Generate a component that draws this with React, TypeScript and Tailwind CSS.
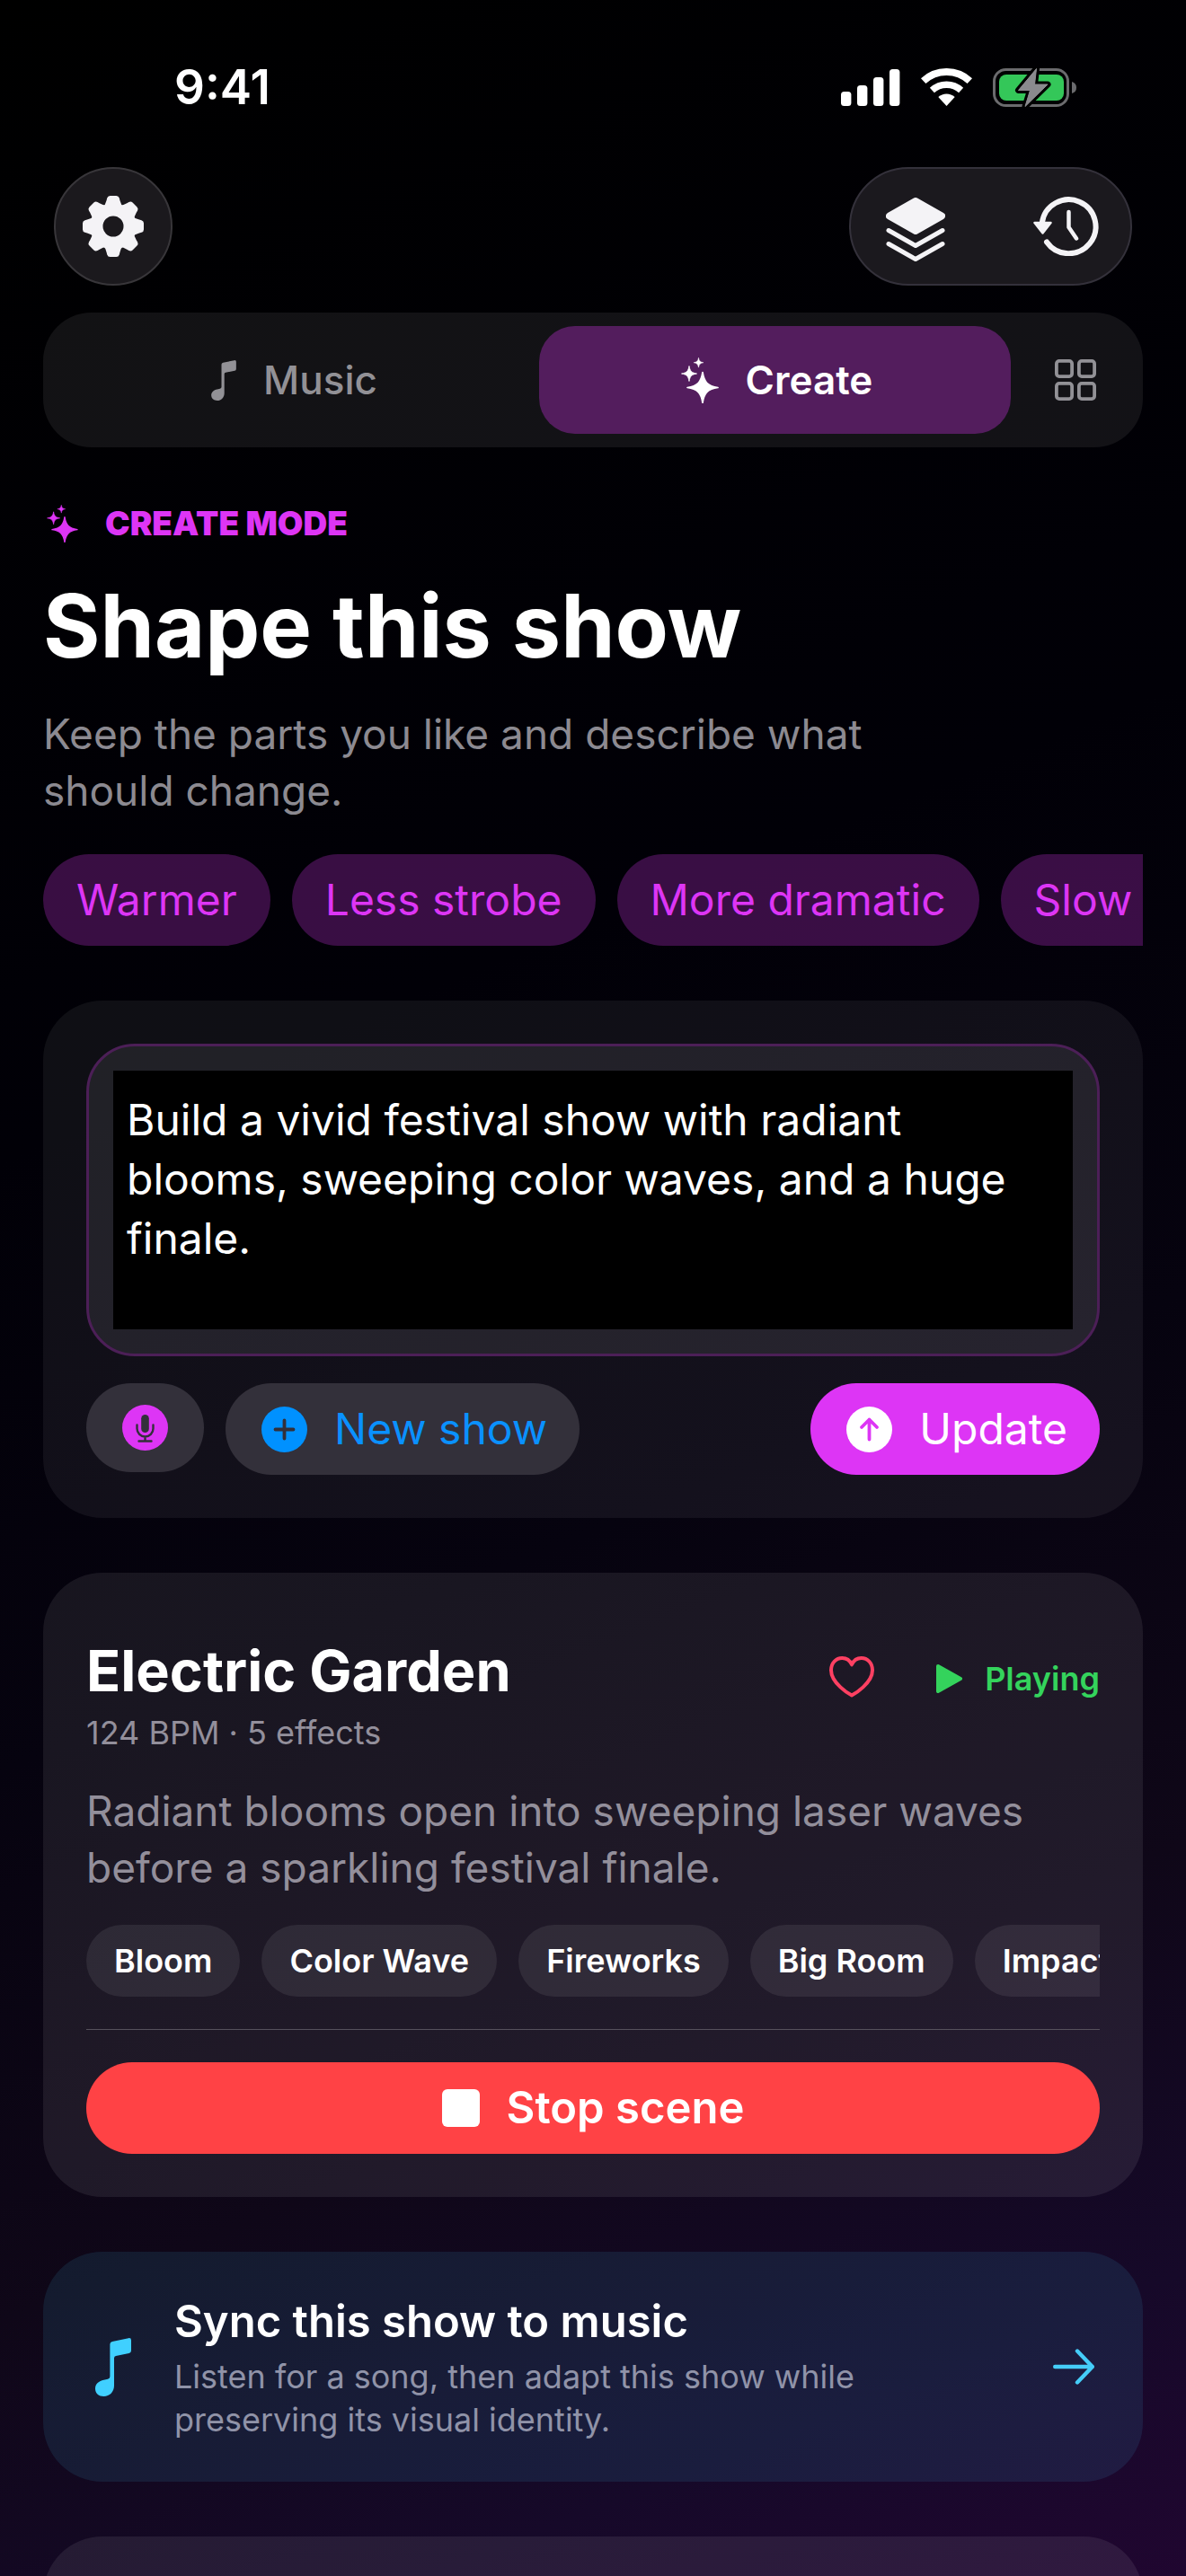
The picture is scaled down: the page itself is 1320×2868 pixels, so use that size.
import React from 'react';

const STAR = 'M0-1C.1-.34.34-.1 1 0C.34.1.1.34 0 1C-.1.34-.34.1-1 0C-.34-.1-.1-.34 0-1Z';

const Sparkles = ({ className }: { className: string }) => (
  <svg viewBox="0 0 42 51" className={className} fill="currentColor" stroke="currentColor" strokeWidth=".1" strokeLinejoin="round" aria-hidden="true">
    <path d={STAR} transform="translate(24 33.5) scale(17)" />
    <path d={STAR} transform="translate(9 18) scale(8.5)" />
    <path d={STAR} transform="translate(19.5 5.7) scale(5.4)" />
  </svg>
);

const Note = ({ className }: { className: string }) => (
  <svg viewBox="0 0 40 65" className={className} fill="currentColor" aria-hidden="true">
    <path d="M16.4 7Q16.4 4.5 19 4L37 .2Q40-.3 40 2.5V14Q40 16.5 37.6 17L23 20Q21 20.4 21 22.5V53C21 60 16 65 9.5 65C4 65 0 61.5 0 56.5C0 51 4 48 9.5 46.8L14 45.8Q16.4 45.2 16.4 43Z" />
  </svg>
);

const Gear = () => (
  <svg viewBox="-34 -34 68 68" className="size-[68px]" aria-hidden="true">
    <circle r="18" fill="none" stroke="currentColor" strokeWidth="13" />
    {[0, 45, 90, 135, 180, 225, 270, 315].map((angle) => (
      <path
        key={angle}
        transform={`rotate(${angle})`}
        d="M-12-21Q-8.5-24-7.4-29L-6.8-31.5Q-6-34-3.5-34H3.5Q6-34 6.8-31.5L7.4-29Q8.5-24 12-21Z"
        fill="currentColor"
      />
    ))}
  </svg>
);

const Layers = () => (
  <svg viewBox="0 0 66 72" className="h-[72px] w-[66px]" stroke="currentColor" strokeLinejoin="round" strokeLinecap="round" aria-hidden="true">
    <path d="M33 4L62 20.5L33 37L4 20.5Z" fill="currentColor" strokeWidth="8" />
    <path d="M3 36.5L33 53.5L63 36.5M3 51.5L33 68.5L63 51.5" fill="none" strokeWidth="5" />
  </svg>
);

const History = () => (
  <svg viewBox="0 0 73 66" className="h-[66px] w-[73px]" fill="none" stroke="currentColor" strokeLinecap="round" strokeLinejoin="round" aria-hidden="true">
    <path d="M9.8 29A30 30 0 1 1 15 50.5" strokeWidth="6" />
    <path d="M1.5 29H19.5L10.5 40.5Z" fill="currentColor" strokeWidth="2.5" />
    <path d="M39.5 17V34L48 46.5" strokeWidth="4.5" />
  </svg>
);

const Tiles = () => (
  <svg viewBox="0 0 46 46" className="size-[46px]" fill="none" stroke="currentColor" strokeWidth="3.8" aria-hidden="true">
    <rect x="1.9" y="1.9" width="17.2" height="17.2" rx="3" />
    <rect x="26.9" y="1.9" width="17.2" height="17.2" rx="3" />
    <rect x="1.9" y="26.9" width="17.2" height="17.2" rx="3" />
    <rect x="26.9" y="26.9" width="17.2" height="17.2" rx="3" />
  </svg>
);

const StatusIcons = () => (
  <div className="flex items-center gap-[23px]">
    <svg viewBox="0 0 66 42" className="h-[42px] w-[66px]" fill="white" aria-hidden="true">
      <rect x="0" y="26" width="11.4" height="16" rx="3.5" />
      <rect x="18" y="19" width="11.4" height="23" rx="3.5" />
      <rect x="36" y="10" width="11.4" height="32" rx="3.5" />
      <rect x="54" y="1" width="11.4" height="41" rx="3.5" />
    </svg>
    <svg viewBox="0 0 57 42" className="h-[42px] w-[57px]" fill="none" stroke="white" aria-hidden="true">
      <path d="M2.7 14.1A38 38 0 0 1 54.3 14.1" strokeWidth="8" />
      <path d="M12.4 24.5A23.8 23.8 0 0 1 44.6 24.5" strokeWidth="7.5" />
      <path d="M19.3 32.1A13.5 13.5 0 0 1 37.7 32.1L28.5 42Z" fill="white" stroke="none" />
    </svg>
    <svg viewBox="0 0 93 45" className="h-[45px] w-[93px]" aria-hidden="true">
      <rect x="1.5" y="2.5" width="82" height="40" rx="13" fill="none" stroke="#6b6b6e" strokeWidth="3" />
      <rect x="7" y="8" width="72" height="29" rx="8" fill="#34c759" />
      <path d="M88 16Q93 17.5 93 22.5T88 29Z" fill="#6b6b6e" />
      <path d="M48.5 1.5L28.5 25.5H41.5L36 43.5L61 19H46.5Z" fill="#8a8a8e" stroke="black" strokeWidth="7" strokeLinejoin="round" paintOrder="stroke" />
      <path d="M48.5 1.5L28.5 25.5H41.5L36 43.5L61 19H46.5Z" fill="#8a8a8e" stroke="#8a8a8e" strokeLinejoin="round" />
    </svg>
  </div>
);

const suggestions = ['Warmer', 'Less strobe', 'More dramatic', 'Slow down'];
const effects = ['Bloom', 'Color Wave', 'Fireworks', 'Big Room', 'Impact'];

const App = () => {
  return (
    <div className="flex h-screen flex-col overflow-hidden bg-black bg-[linear-gradient(158deg,#000_0%,#010007_38%,#06030f_58%,#0f0718_76%,#160929_90%,#200630_100%)] px-12 font-['Inter',sans-serif] text-white">
      <div className="mt-16 flex h-[66px] shrink-0 items-center justify-between pr-[74px] pl-[146px]">
        <span className="text-[53px] leading-[66px] font-semibold">9:41</span>
        <StatusIcons />
      </div>

      <header className="mt-14 flex shrink-0 items-center justify-between px-3 text-[#f4f3f6]">
        <button type="button" aria-label="Settings" className="flex size-[132px] items-center justify-center rounded-full border-2 border-[#38363a] bg-[#1b191d]">
          <Gear />
        </button>
        <div className="flex h-[132px] w-[315px] items-center justify-between rounded-full border-2 border-[#34313b] bg-[#1b191e] px-1.5">
          <button type="button" aria-label="Layers" className="flex h-full w-[132px] items-center justify-center pt-2">
            <Layers />
          </button>
          <button type="button" aria-label="History" className="flex h-full w-[132px] items-center justify-center">
            <History />
          </button>
        </div>
      </header>

      <nav className="mt-[30px] flex shrink-0 gap-3 rounded-[54px] bg-white/7 p-[15px] text-[44px] text-[#929196]">
        <button type="button" className="flex h-[120px] flex-1 items-center justify-center gap-[30px] rounded-[40px] pl-1 font-medium">
          <Note className="h-[45px] w-7" />
          Music
        </button>
        <button type="button" aria-pressed="true" className="flex h-[120px] flex-1 items-center justify-center gap-[30px] rounded-[40px] bg-[#dd35f5]/32 pl-1 font-semibold text-white">
          <Sparkles className="h-[51px] w-[42px]" />
          Create
        </button>
        <button type="button" aria-label="Gallery" className="flex size-[120px] items-center justify-center">
          <Tiles />
        </button>
      </nav>

      <main className="mt-[60px] flex min-h-0 flex-1 flex-col gap-[61px] overflow-hidden">
        <section className="shrink-0">
          <div className="flex h-[50px] items-center gap-[30px] pl-1 text-[37px] font-black text-[#dd35f5]">
            <Sparkles className="h-[42px] w-[35px]" />
            CREATE MODE
          </div>
          <h1 className="mt-7 text-[97px] leading-[122px] font-bold">Shape this show</h1>
          <p className="mt-7 max-w-[1000px] text-[46px] leading-[63px] text-[#8c8a91]">
            Keep the parts you like and describe what should change.
          </p>
          <div className="mt-[39px] flex gap-6 overflow-hidden">
            {suggestions.map((label) => (
              <button key={label} type="button" className="h-[102px] shrink-0 rounded-full bg-[#dd35f5]/26 px-[37px] text-[48px] text-[#dd35f5]">
                {label}
              </button>
            ))}
          </div>
        </section>

        <section className="flex shrink-0 flex-col gap-[30px] rounded-[66px] bg-white/6 p-12">
          <div className="rounded-[54px] border-[3px] border-[#4c1f57] bg-white/8 p-[27px]">
            <textarea
              aria-label="Describe the show"
              className="block h-[288px] w-full resize-none bg-black px-[15px] pt-[22px] text-[48px] leading-[66px] outline-none"
              defaultValue="Build a vivid festival show with radiant blooms, sweeping color waves, and a huge finale."
            />
          </div>
          <div className="flex items-start gap-6">
            <button type="button" aria-label="Dictate" className="flex h-[99px] w-[131px] items-center justify-center rounded-full bg-[#33303a]">
              <svg viewBox="0 0 51 51" className="size-[51px]" aria-hidden="true">
                <circle cx="25.5" cy="25.5" r="25.5" fill="#dd35f5" />
                <rect x="21.2" y="11" width="8.6" height="20" rx="4.3" fill="#33303a" />
                <path d="M16.5 22.5V26.5A9 9 0 0 0 34.5 26.5V22.5M25.5 35.5V40.5M18.5 40.5H32.5" fill="none" stroke="#33303a" strokeWidth="2.4" strokeLinecap="round" />
              </svg>
            </button>
            <button type="button" className="flex h-[102px] items-center gap-[30px] rounded-full bg-[#33303a] pr-9 pl-10 text-[48px] text-[#0a91ff]">
              <svg viewBox="0 0 51 51" className="size-[51px]" aria-hidden="true">
                <circle cx="25.5" cy="25.5" r="25.5" fill="#0091ff" />
                <path d="M25.5 15.5V35.5M15.5 25.5H35.5" stroke="#33303a" strokeWidth="3.8" strokeLinecap="round" />
              </svg>
              New show
            </button>
            <button type="button" className="ml-auto flex h-[102px] items-center gap-[30px] rounded-full bg-[#dd35f5] pr-9 pl-10 text-[48px]">
              <svg viewBox="0 0 51 51" className="size-[51px]" fill="none" aria-hidden="true">
                <circle cx="25.5" cy="25.5" r="25.5" fill="white" />
                <path d="M25.5 14.5V36.5M17 23L25.5 14.5L34 23" stroke="#dd35f5" strokeWidth="3.8" strokeLinecap="round" strokeLinejoin="round" />
              </svg>
              Update
            </button>
          </div>
        </section>

        <section className="shrink-0 rounded-[66px] bg-white/8 p-12">
          <div className="flex items-start justify-between pt-5">
            <div>
              <h2 className="text-[63px] leading-[82px] font-bold">Electric Garden</h2>
              <p className="mt-1 text-[36px] leading-[48px] text-[#938f9b]">124 BPM · 5 effects</p>
            </div>
            <div className="flex h-24 items-center">
              <button type="button" aria-label="Favorite" className="mr-[69px]">
                <svg viewBox="0 0 50 46" className="h-[46px] w-[50px]" fill="none" stroke="#ff4062" strokeWidth="4" strokeLinejoin="round" aria-hidden="true">
                  <path d="M25 43.6C22 42 2 30 2 15.5C2 7.5 7.5 2 14.3 2C19 2 23 4.8 25 9.3C27 4.8 31 2 35.7 2C42.5 2 48 7.5 48 15.5C48 30 28 42 25 43.6Z" />
                </svg>
              </button>
              <span className="flex items-center gap-[25px] pt-1 text-[36px] font-semibold text-[#34d35c]">
                <svg viewBox="0 0 29 32" className="h-8 w-[29px]" fill="currentColor" stroke="currentColor" strokeWidth="4" strokeLinejoin="round" aria-hidden="true">
                  <path d="M2 2L27 16L2 30Z" />
                </svg>
                Playing
              </span>
            </div>
          </div>
          <p className="mt-8 text-[46px] leading-[63px] text-[#938f9b]">
            Radiant blooms open into sweeping laser waves before a sparkling festival finale.
          </p>
          <ul className="mt-8 flex gap-6 overflow-hidden">
            {effects.map((effect) => (
              <li key={effect} className="shrink-0 rounded-full bg-white/8 px-[31px] text-[36px] leading-[80px] font-semibold">
                {effect}
              </li>
            ))}
          </ul>
          <hr className="my-9 border-t border-[#56515c]" />
          <button type="button" className="flex h-[102px] w-full items-center justify-center gap-[30px] rounded-full bg-[#ff4245] text-[49px] font-semibold">
            <span className="size-[42px] rounded-md bg-white" />
            Stop scene
          </button>
        </section>

        <a href="#sync" className="flex shrink-0 items-center rounded-[66px] bg-[#40d0ff]/10 px-12 py-[45px]">
          <span className="flex w-[60px] justify-center text-[#40d0ff]">
            <Note className="h-[65px] w-10" />
          </span>
          <span className="ml-[38px] flex-1">
            <strong className="block text-[49px] leading-[66px] font-semibold">Sync this show to music</strong>
            <span className="mt-1 block max-w-[800px] text-[36px] leading-[48px] text-[#9093a8]">
              Listen for a song, then adapt this show while preserving its visual identity.
            </span>
          </span>
          <svg viewBox="0 0 46 40" className="mr-1.5 h-10 w-[46px]" fill="none" stroke="#45cdf8" strokeWidth="4.4" strokeLinecap="round" strokeLinejoin="round" aria-hidden="true">
            <path d="M2.2 20H43.8M27 2.5L43.8 20L27 37.5" />
          </svg>
        </a>

        <section className="h-[300px] shrink-0 rounded-[66px] bg-white/8" />
      </main>
    </div>
  );
};

export default App;
